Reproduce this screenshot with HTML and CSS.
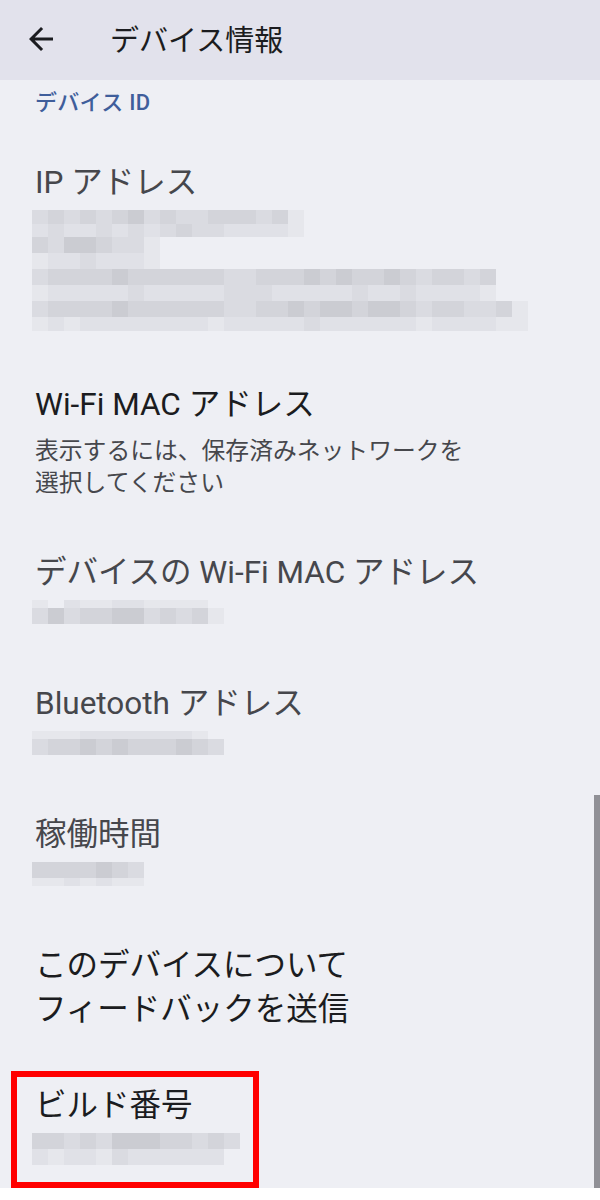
FILE: index.html
```html
<!DOCTYPE html>
<html lang="ja">
<head>
  <meta charset="UTF-8">
  <meta name="viewport" content="width=device-width, initial-scale=1.0">
  <title>デバイス情報</title>
  <link rel="stylesheet" href="styles.css">
</head>
<body>
  <div class="screen">
    <header class="appbar">
      <button class="back" aria-label="戻る">
        <svg viewBox="0 0 24 24" width="36" height="36"><path d="M20 11H7.83l5.59-5.59L12 4l-8 8 8 8 1.41-1.41L7.83 13H20v-2z"/></svg>
      </button>
      <h1>デバイス情報</h1>
    </header>

    <main class="list">
      <div class="category">デバイス ID</div>

      <div class="pref muted">
        <div class="pref-title">IP アドレス</div>
        <div class="blur" data-key="ip"></div>
      </div>

      <div class="pref">
        <div class="pref-title">Wi-Fi MAC アドレス</div>
        <div class="pref-summary">表示するには、保存済みネットワークを<br>選択してください</div>
      </div>

      <div class="pref muted">
        <div class="pref-title">デバイスの Wi-Fi MAC アドレス</div>
        <div class="blur" data-key="mac"></div>
      </div>

      <div class="pref muted">
        <div class="pref-title">Bluetooth アドレス</div>
        <div class="blur" data-key="bt"></div>
      </div>

      <div class="pref muted">
        <div class="pref-title">稼働時間</div>
        <div class="blur" data-key="uptime"></div>
      </div>

      <div class="pref">
        <div class="pref-title">このデバイスについて<br>フィードバックを送信</div>
      </div>

      <div class="pref marked">
        <div class="pref-title">ビルド番号</div>
        <div class="blur" data-key="build"></div>
        <div class="mark"></div>
      </div>
    </main>

    <div class="scrollbar"></div>
  </div>

  <script>
    // 隠した値のモザイク: [行の高さ, 各マスの濃さ 0-5]
    const blurData = {
      ip: [
        [14, "34343453433444341"],
        [13, "23223232343322221"],
        [16, "43554331"],
        [16, "12232221"],
        [16, "34444544444433444545445434434"],
        [16, "12222232222233322222322322221"],
        [16, "3444454444443344545545543443341"],
        [14, "1212222222212222232222221222211"]
      ],
      mac: [
        [8, "102112211110"],
        [16, "353445534341"],
        [6, ""]
      ],
      bt: [
        [8, "11122222221"],
        [16, "344545444543"],
        [6, ""]
      ],
      uptime: [
        [16, "4444543"],
        [8, "1121211"],
        [6, ""]
      ],
      build: [
        [16, "4434355544343"],
        [16, "212213222222"]
      ]
    };

    document.querySelectorAll(".blur").forEach((el) => {
      blurData[el.dataset.key].forEach(([h, cells]) => {
        const row = document.createElement("div");
        row.className = "blur-row";
        row.style.height = h + "px";
        for (const c of cells) {
          const cell = document.createElement("span");
          cell.className = "cell s" + c;
          row.appendChild(cell);
        }
        el.appendChild(row);
      });
    });
  </script>
</body>
</html>
```

FILE: styles.css
```css
body {
  margin: 0;
  background: #ffffff;
  font-family: Roboto, "Noto Sans CJK JP", "Noto Sans", sans-serif;
  color: #1b1c20;
}

.screen {
  position: relative;
  width: 600px;
  height: 1188px;
  overflow: hidden;
  background: #eeeff4;
}

.appbar {
  height: 80px;
  box-sizing: border-box;
  display: flex;
  align-items: center;
  padding: 0 0 5px 23px;
  background: #e2e2ec;
}

.back {
  width: 36px;
  height: 36px;
  padding: 0;
  border: 0;
  background: none;
  margin-top: 2px;
}

.back svg {
  display: block;
  fill: #1b1c20;
}

.appbar h1 {
  margin: 0 0 0 51px;
  font-size: 29px;
  font-weight: 400;
  color: #1b1c20;
}

.category {
  padding: 9px 0 18px 35px;
  font-size: 22px;
  line-height: 28px;
  font-weight: 500;
  letter-spacing: 0.3px;
  color: #3f5e9b;
}

.pref {
  position: relative;
  padding: 26px 24px 26px 35px;
}

.pref-title {
  font-size: 31.5px;
  line-height: 44px;
  color: #1b1c20;
}

.muted .pref-title {
  color: #46474c;
}

.pref-summary {
  margin-top: 8px;
  font-size: 23.8px;
  line-height: 32px;
  color: #46474c;
}

.blur {
  margin: 5px 0 0 -3px;
}

.blur-row {
  display: flex;
}

.cell {
  width: 16px;
  height: 100%;
}

.s0 { background: transparent; }
.s1 { background: #e6e7ec; }
.s2 { background: #e0e1e7; }
.s3 { background: #dadbe1; }
.s4 { background: #d3d4da; }
.s5 { background: #cbccd2; }

.mark {
  position: absolute;
  left: 11px;
  top: 13px;
  width: 248px;
  height: 117px;
  box-sizing: border-box;
  border: 6px solid #ff0000;
}

.scrollbar {
  position: absolute;
  right: 0;
  top: 795px;
  width: 6px;
  height: 393px;
  background: #909096;
}
```
